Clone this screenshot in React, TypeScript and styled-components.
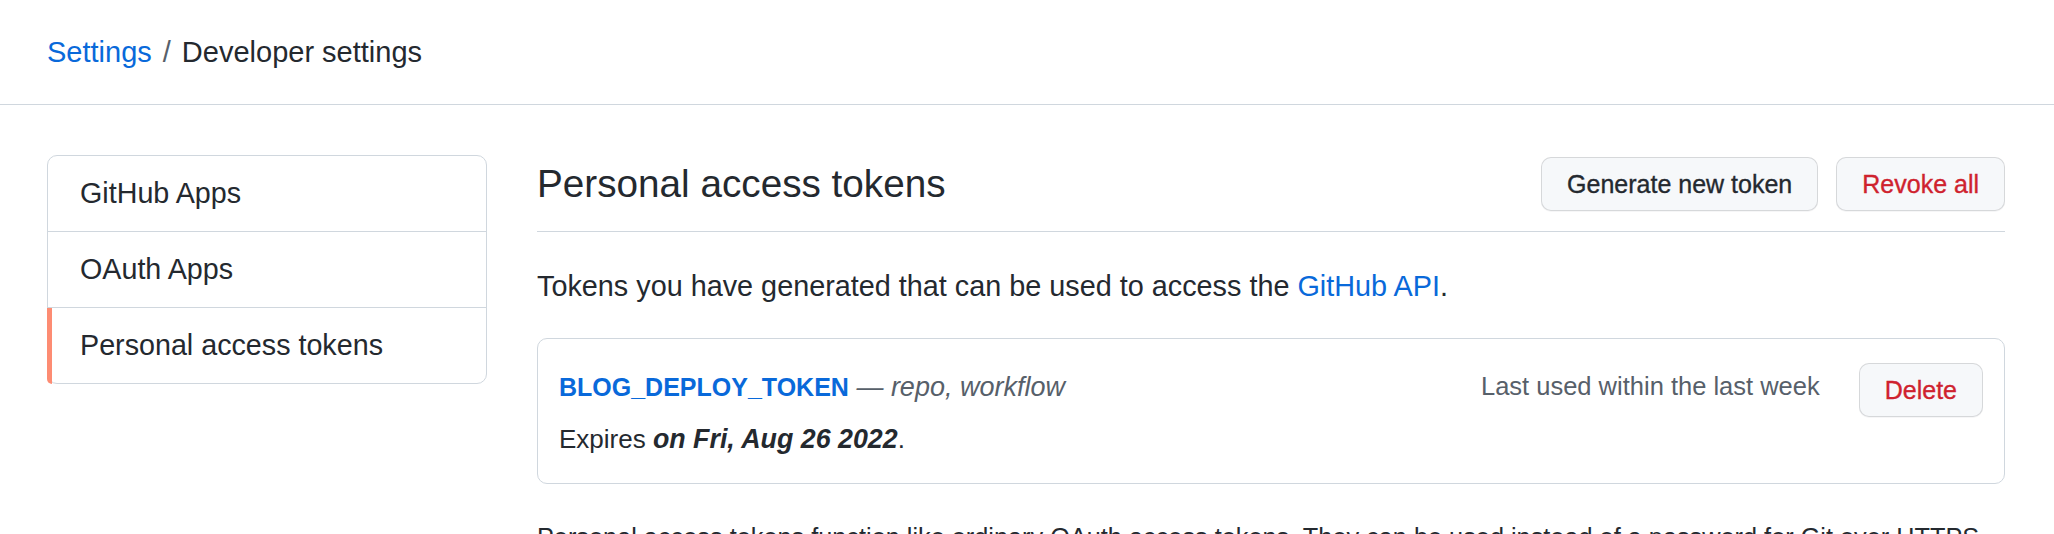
import React from "react";
import styled, { createGlobalStyle } from "styled-components";

const GlobalStyle = createGlobalStyle`
  html, body {
    margin: 0;
    padding: 0;
    background: #ffffff;
    overflow: hidden;
  }
  body {
    font-family: "Liberation Sans", Arial, Helvetica, sans-serif;
    color: #24292f;
  }
  * { box-sizing: border-box; }
`;

const Page = styled.div`
  width: 2054px;
  height: 534px;
  overflow: hidden;
  background: #ffffff;
`;

const Header = styled.header`
  height: 105px;
  border-bottom: 1px solid #d0d7de;
  display: flex;
  align-items: center;
  padding: 0 47px;
`;

const Breadcrumb = styled.nav`
  display: flex;
  align-items: baseline;
  font-size: 29px;
  line-height: 1.25;
`;

const CrumbLink = styled.a`
  color: #0969da;
  text-decoration: none;
`;

const CrumbSep = styled.span`
  color: #57606a;
  padding: 0 11px;
`;

const CrumbCurrent = styled.span`
  color: #24292f;
`;

const Main = styled.main`
  display: flex;
  align-items: flex-start;
  gap: 50px;
  padding: 50px 49px 0 47px;
`;

const SideNav = styled.nav`
  width: 440px;
  flex: none;
  border: 1px solid #d0d7de;
  border-radius: 10px;
`;

const NavItem = styled.a<{ $active?: boolean }>`
  position: relative;
  box-sizing: content-box;
  display: flex;
  align-items: center;
  height: 75px;
  padding-left: 32px;
  font-size: 28.7px;
  color: #24292f;
  text-decoration: none;

  & + & {
    border-top: 1px solid #d0d7de;
  }

  ${(p) =>
    p.$active &&
    `
    &::before {
      content: "";
      position: absolute;
      left: -1px;
      top: 0;
      bottom: -1px;
      width: 5px;
      background: #fd8c73;
      border-bottom-left-radius: 10px;
    }
  `}
`;

const Content = styled.section`
  flex: 1;
  min-width: 0;
  padding-top: 2px;
`;

const Subhead = styled.div`
  display: flex;
  align-items: center;
  justify-content: space-between;
  padding-bottom: 20px;
  border-bottom: 1px solid #d0d7de;
`;

const Title = styled.h2`
  margin: 0;
  font-size: 38.7px;
  font-weight: 400;
  line-height: 1.2;
  color: #24292f;
`;

const ButtonGroup = styled.div`
  display: flex;
  gap: 18px;
`;

const Button = styled.button<{ $danger?: boolean }>`
  height: 54px;
  padding: 0 25px;
  border: 1px solid rgba(31, 35, 40, 0.15);
  border-radius: 10px;
  background: #f6f8fa;
  box-shadow: 0 1px 0 rgba(31, 35, 40, 0.04);
  font-family: inherit;
  font-size: 25px;
  line-height: 1;
  color: ${(p) => (p.$danger ? "#cf222e" : "#24292f")};
  -webkit-text-stroke: 0.35px currentColor;
  cursor: pointer;
  white-space: nowrap;
`;

const Intro = styled.p`
  margin: 33px 0 0;
  font-size: 28.8px;
  line-height: 43px;
`;

const Link = styled.a`
  color: #0969da;
  text-decoration: none;
`;

const TokenCard = styled.div`
  margin-top: 30px;
  border: 1px solid #d0d7de;
  border-radius: 10px;
  padding: 24px 21px 26px 21px;
`;

const TokenTop = styled.div`
  display: flex;
  align-items: center;
  height: 54px;
`;

const TokenTitle = styled.div`
  padding-bottom: 6px;
  font-size: 26px;
  white-space: nowrap;
`;

const TokenName = styled.a`
  font-size: 25px;
  font-weight: 700;
  color: #0969da;
  text-decoration: none;
`;

const Scopes = styled.em`
  font-size: 27px;
  color: #57606a;
`;

const LastUsed = styled.span`
  margin-left: auto;
  margin-right: 39px;
  padding-bottom: 8px;
  font-size: 25.5px;
  color: #57606a;
  white-space: nowrap;
`;

const Expires = styled.div`
  margin-top: 4px;
  font-size: 26px;
  line-height: 36px;
  color: #24292f;
`;

const ExpiryDate = styled.strong`
  font-style: italic;
  font-weight: 700;
  font-size: 26.8px;
`;

const Note = styled.p`
  margin: 34px 0 0;
  font-size: 25.3px;
  line-height: 38px;
  color: #24292f;
`;

export default function App() {
  return (
    <Page>
      <GlobalStyle />
      <Header>
        <Breadcrumb>
          <CrumbLink href="#">Settings</CrumbLink>
          <CrumbSep>/</CrumbSep>
          <CrumbCurrent>Developer settings</CrumbCurrent>
        </Breadcrumb>
      </Header>
      <Main>
        <SideNav>
          <NavItem href="#">GitHub Apps</NavItem>
          <NavItem href="#">OAuth Apps</NavItem>
          <NavItem href="#" $active>
            Personal access tokens
          </NavItem>
        </SideNav>
        <Content>
          <Subhead>
            <Title>Personal access tokens</Title>
            <ButtonGroup>
              <Button>Generate new token</Button>
              <Button $danger>Revoke all</Button>
            </ButtonGroup>
          </Subhead>
          <Intro>
            Tokens you have generated that can be used to access the{" "}
            <Link href="#">GitHub API</Link>.
          </Intro>
          <TokenCard>
            <TokenTop>
              <TokenTitle>
                <TokenName href="#">BLOG_DEPLOY_TOKEN</TokenName>
                <Scopes> — repo, workflow</Scopes>
              </TokenTitle>
              <LastUsed>Last used within the last week</LastUsed>
              <Button $danger>Delete</Button>
            </TokenTop>
            <Expires>
              Expires <ExpiryDate>on Fri, Aug 26 2022</ExpiryDate>.
            </Expires>
          </TokenCard>
          <Note>
            Personal access tokens function like ordinary OAuth access tokens. They can be used
            instead of a password for Git over HTTPS, or can be used to authenticate to the API
            over Basic Authentication.
          </Note>
        </Content>
      </Main>
    </Page>
  );
}
